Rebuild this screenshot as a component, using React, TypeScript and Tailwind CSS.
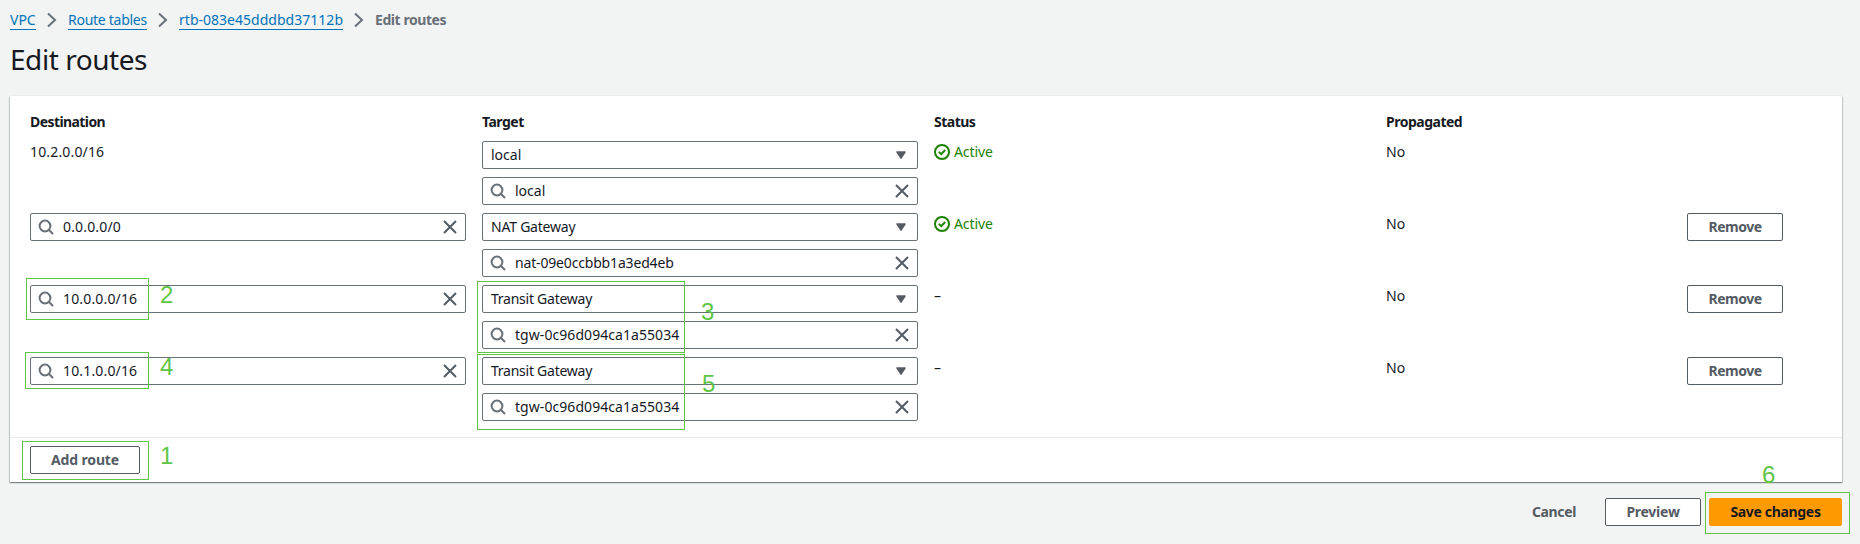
import type { ReactNode } from "react";

type Field = { text: string; tracking: string };
type Route = {
  destination: string;
  editable: boolean;
  kind: Field;
  target: Field;
  active: boolean;
};

const routes: Route[] = [
  {
    destination: "10.2.0.0/16",
    editable: false,
    kind: { text: "local", tracking: "" },
    target: { text: "local", tracking: "" },
    active: true,
  },
  {
    destination: "0.0.0.0/0",
    editable: true,
    kind: { text: "NAT Gateway", tracking: "tracking-[-0.22px]" },
    target: { text: "nat-09e0ccbbb1a3ed4eb", tracking: "tracking-[-0.17px]" },
    active: true,
  },
  {
    destination: "10.0.0.0/16",
    editable: true,
    kind: { text: "Transit Gateway", tracking: "tracking-[-0.25px]" },
    target: { text: "tgw-0c96d094ca1a55034", tracking: "tracking-[0.06px]" },
    active: false,
  },
  {
    destination: "10.1.0.0/16",
    editable: true,
    kind: { text: "Transit Gateway", tracking: "tracking-[-0.25px]" },
    target: { text: "tgw-0c96d094ca1a55034", tracking: "tracking-[0.06px]" },
    active: false,
  },
];

function SearchIcon() {
  return (
    <svg className="h-4 w-4 shrink-0" viewBox="0 0 16 16" fill="none" stroke="#687078" strokeWidth="2">
      <circle cx="7" cy="7" r="5.4" />
      <path d="M10.8 10.8 15 15" />
    </svg>
  );
}

function CloseIcon() {
  return (
    <svg className="h-4 w-4 shrink-0" viewBox="0 0 16 16" fill="none" stroke="#545b64" strokeWidth="2">
      <path d="M2 2l12 12M14 2 2 14" />
    </svg>
  );
}

function CaretIcon() {
  return (
    <svg className="h-4 w-4 shrink-0" viewBox="0 0 16 16" fill="#545b64" stroke="#545b64" strokeWidth="1.5" strokeLinejoin="round">
      <path d="M4 5h8l-4 6.2z" />
    </svg>
  );
}

function StatusIcon() {
  return (
    <svg className="h-4 w-4 shrink-0" viewBox="0 0 16 16" fill="none" stroke="#1d8102" strokeWidth="2">
      <circle cx="8" cy="8" r="7" />
      <path d="M4.8 7.9 7.2 10.2 11.2 6" />
    </svg>
  );
}

function Chevron() {
  return (
    <svg className="mx-[11px] h-4 w-[10px] shrink-0" viewBox="0 0 10 16" fill="none" stroke="#687078" strokeWidth="2">
      <path d="M1 1.4 8 8l-7 6.6" />
    </svg>
  );
}

function Select({ field }: { field: Field }) {
  return (
    <div className="flex h-7 items-center justify-between rounded-xs border border-[#687078] bg-white px-2">
      <span className={field.tracking}>{field.text}</span>
      <CaretIcon />
    </div>
  );
}

function Search({ text, tracking }: Field) {
  return (
    <div className="flex h-7 items-center rounded-xs border border-[#687078] bg-white px-[7px]">
      <SearchIcon />
      <span className={`ml-[9px] flex-1 ${tracking}`}>{text}</span>
      <CloseIcon />
    </div>
  );
}

function Button({ children, className }: { children: ReactNode; className: string }) {
  return (
    <button className={`flex h-7 items-center justify-center rounded-xs border font-bold ${className}`}>
      {children}
    </button>
  );
}

function Crumb({ children, className }: { children: ReactNode; className: string }) {
  return (
    <a className={`block h-5 border-b border-[#0073bb] leading-5 whitespace-nowrap text-[#0073bb] ${className}`}>
      {children}
    </a>
  );
}

/* Numbered callouts drawn over the form. */
function Callout({ n, box, label }: { n: number; box: string; label: string }) {
  return (
    <>
      <div className={`pointer-events-none absolute border border-[#5fc547] ${box}`} />
      <span
        className={`pointer-events-none absolute font-['Liberation_Sans',Arial,sans-serif] text-[24px] leading-6 text-[#5fc547] ${label}`}
      >
        {n}
      </span>
    </>
  );
}

export default function App() {
  return (
    <div className="relative h-[544px] w-[1860px] overflow-hidden bg-[#f2f3f3] px-[10px] pt-[10px] font-['Noto_Sans',sans-serif] text-[14px] leading-[22px] text-[#16191f]">
      <nav className="flex h-5 items-center">
        <Crumb className="w-[26px]">VPC</Crumb>
        <Chevron />
        <Crumb className="w-[79px] tracking-[-0.27px]">Route tables</Crumb>
        <Chevron />
        <Crumb className="w-[164px] tracking-[0.02px]">rtb-083e45dddbd37112b</Crumb>
        <Chevron />
        <span className="font-bold tracking-[-0.43px] text-[#687078]">Edit routes</span>
      </nav>
      <h1 className="mt-[11px] h-9 text-[28px] leading-9 tracking-[-0.45px]">Edit routes</h1>

      <main className="mt-[19px] h-[386px] w-[1832px] bg-white shadow-[0_-1px_0_0_#eaeded,0_1px_1px_0_rgba(0,28,36,0.3),1px_1px_1px_0_rgba(0,28,36,0.15),-1px_1px_1px_0_rgba(0,28,36,0.15)]">
        <div className="flex h-[341px] flex-col px-5 pt-[15px]">
          <div className="grid grid-cols-[436px_436px_436px_285px_96px] gap-x-4 font-bold">
            <span className="tracking-[-0.58px]">Destination</span>
            <span className="tracking-[-0.5px]">Target</span>
            <span className="tracking-[-0.5px]">Status</span>
            <span className="tracking-[-0.5px]">Propagated</span>
          </div>
          <div className="mt-2">
            {routes.map((route) => (
              <div key={route.destination} className="grid h-[72px] grid-cols-[436px_436px_436px_285px_96px] gap-x-4">
                {route.editable ? (
                  <div>
                    <Search text={route.destination} tracking="tracking-[0.16px]" />
                  </div>
                ) : (
                  <span className="tracking-[0.16px]">{route.destination}</span>
                )}
                <div className="flex flex-col gap-2">
                  <Select field={route.kind} />
                  <Search {...route.target} />
                </div>
                {route.active ? (
                  <span className="flex h-[22px] items-center gap-1 tracking-[-0.1px] text-[#1d8102]">
                    <StatusIcon />
                    Active
                  </span>
                ) : (
                  <span>–</span>
                )}
                <span>No</span>
                {route.editable && <Button className="border-[#545b64] bg-white tracking-[-0.5px] text-[#545b64]">Remove</Button>}
              </div>
            ))}
          </div>
        </div>
        <div className="flex h-[45px] border-t border-[#eaeded] px-5 pt-2">
          <Button className="w-[110px] border-[#545b64] bg-white tracking-[-0.14px] text-[#545b64]">Add route</Button>
        </div>
      </main>

      <footer className="mt-4 flex w-[1832px] items-center justify-end">
        <span className="mr-[29px] font-bold tracking-[-0.36px] text-[#545b64]">Cancel</span>
        <Button className="mr-2 w-24 border-[#545b64] bg-white tracking-[-0.25px] text-[#545b64]">Preview</Button>
        <Button className="w-[133px] border-[#ff9900] bg-[#ff9900] tracking-[-0.33px] text-[#16191f]">Save changes</Button>
      </footer>

      <Callout n={1} box="top-[441px] left-[22px] h-[39px] w-[127px]" label="top-[444px] left-[160px]" />
      <Callout n={2} box="top-[278px] left-[26px] h-[42px] w-[123px]" label="top-[283px] left-[160px]" />
      <Callout n={3} box="top-[281px] left-[477px] h-[72px] w-[208px]" label="top-[300px] left-[701px]" />
      <Callout n={4} box="top-[352px] left-[25px] h-[37px] w-[124px]" label="top-[355px] left-[160px]" />
      <Callout n={5} box="top-[354px] left-[477px] h-[76px] w-[208px]" label="top-[372px] left-[702px]" />
      <Callout n={6} box="top-[492px] left-[1705px] h-[42px] w-[145px]" label="top-[463px] left-[1762px]" />
    </div>
  );
}
